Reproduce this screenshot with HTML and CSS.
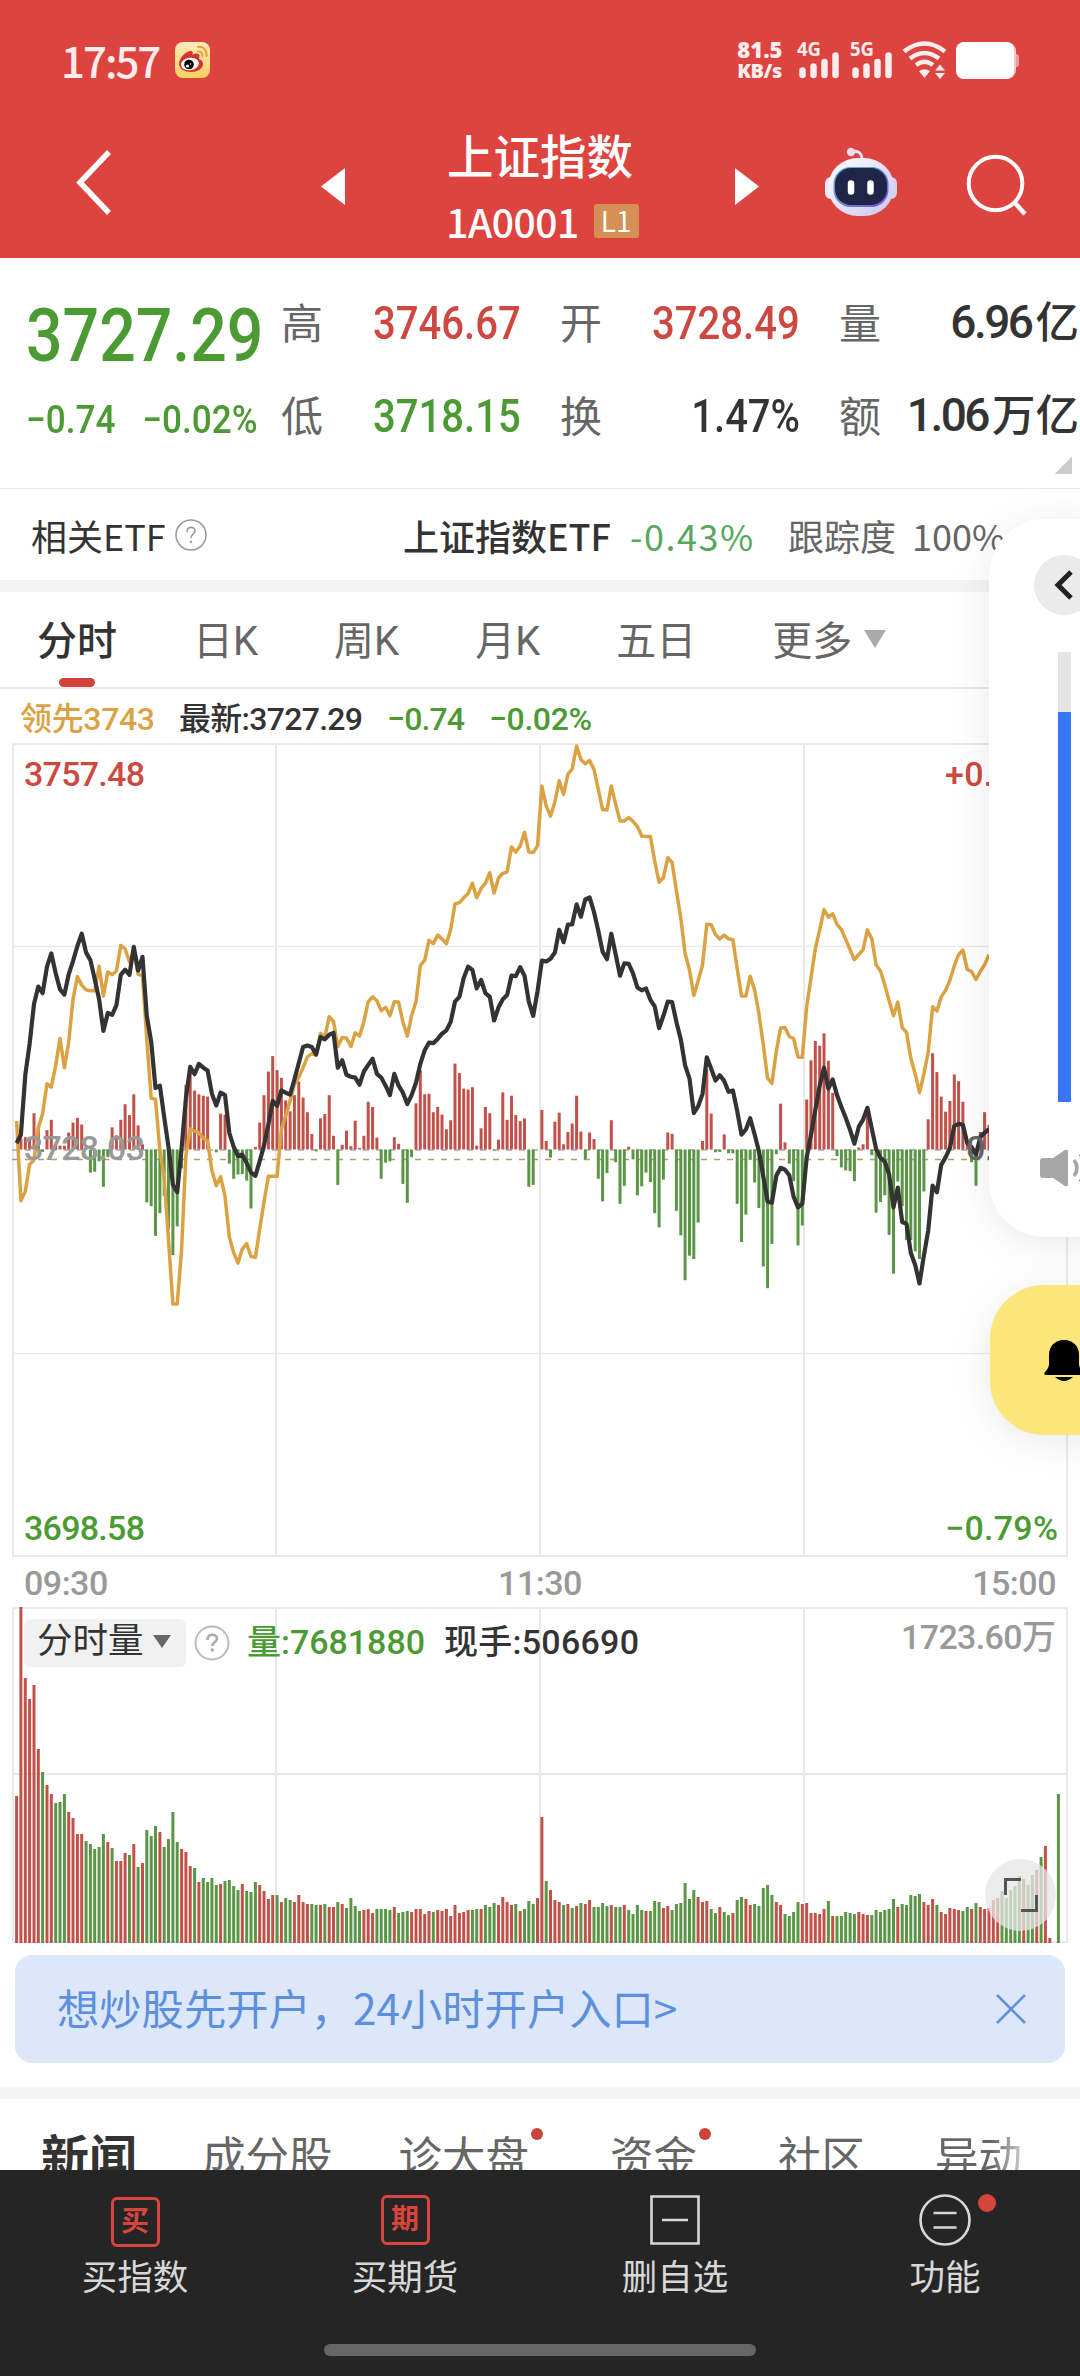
FILE: index.html
```html
<!DOCTYPE html>
<html lang="zh-CN">
<head>
    <meta charset="UTF-8">
    <meta name="viewport" content="width=device-width, initial-scale=1.0">
    <title>上证指数 1A0001</title>
    <link rel="stylesheet" href="styles.css">
</head>
<body>
    <header class="header">
        <div class="status">
            <span class="clock">17:57</span>
            <svg class="weibo" width="35" height="36" viewBox="0 0 35 36">
                <defs><linearGradient id="wb" x1="0" y1="0" x2="0" y2="1"><stop offset="0" stop-color="#fdebbb"/><stop offset="1" stop-color="#f8d160"/></linearGradient></defs>
                <rect width="35" height="36" rx="8" fill="url(#wb)"/>
                <path d="M4 22c0-6 7-13 12-13 2 0 2 2 1.500 4 3-2 7-2 7 1l-.5 3c3 1 4 3 4 5 0 5-6 8-12 8S4 27 4 22z" fill="#d5342d"/>
                <ellipse cx="15" cy="22" rx="9" ry="6.300" fill="#fff" transform="rotate(-8 15 22)"/>
                <circle cx="14" cy="22.500" r="4.800" fill="#000"/>
                <circle cx="12.500" cy="24" r="1.600" fill="#fff"/>
                <circle cx="15.500" cy="22" r=".8" fill="#fff"/>
                <path d="M23 5c5-1 9 3 8.500 9M23 9.500c3-.5 4.500 1.500 4.500 4.500" fill="none" stroke="#e9a03c" stroke-width="2" stroke-linecap="round"/>
            </svg>
            <div class="speed"><b>81.5</b><b class="unit">KB/s</b></div>
            <svg class="signals" width="98" height="38" viewBox="0 0 98 38" fill="#ffecec">
                <text class="net" x="0" y="15" textLength="24" lengthAdjust="spacingAndGlyphs">4G</text>
                <text class="net" x="53" y="15" textLength="24" lengthAdjust="spacingAndGlyphs">5G</text>
                <path d="M5.500 29.500v4.500M16.500 25.500v8.500M27.500 21v13M38.500 14.500v19.500M58.500 29.500v4.500M69.500 25.500v8.500M80.500 21v13M91.500 14.500v19.500" stroke="#ffecec" stroke-width="6.500" stroke-linecap="round"/>
            </svg>
            <svg class="wifi" width="45" height="38" viewBox="0 0 45 38">
                <path d="M2 10.500q20.500-16 41 0M8 17.500q14.500-11 29 0M14 24q8.500-6.500 17 0" fill="none" stroke="#ffecec" stroke-width="4.600"/>
                <path d="M17 30q5.500-3.500 11 0l-5.500 7zM33 29.500l5-6 5 6zM33 32l5 6 5-6z" fill="#ffecec"/>
            </svg>
            <svg class="battery" width="64" height="37" viewBox="0 0 64 37">
                <path d="M59 12h1q3 0 3 3v7q0 3-3 3h-1z" fill="#f0a09c"/>
                <rect width="60" height="37" rx="9" fill="#f7c6c4"/>
                <rect width="58" height="37" rx="8" fill="#fff"/>
            </svg>
        </div>
        <nav class="nav">
            <svg class="back" width="36" height="66" viewBox="0 0 36 66"><path d="M33 2L4 32.500 33 63" fill="none" stroke="#fff" stroke-width="5.500"/></svg>
            <svg class="prev" width="24" height="37" viewBox="0 0 24 37"><path d="M24 0v37L0 18.500z" fill="#fff"/></svg>
            <div class="title">
                <h1>上证指数</h1>
                <div class="code"><span>1A0001</span><i class="level">L1</i></div>
            </div>
            <svg class="next" width="24" height="37" viewBox="0 0 24 37"><path d="M0 0v37l24-18.500z" fill="#fff"/></svg>
            <svg class="robot" width="74" height="70" viewBox="0 0 74 70">
                <defs>
                    <linearGradient id="rb" x1="0" y1="0" x2="1" y2="1"><stop offset="0" stop-color="#fff"/><stop offset="1" stop-color="#c9c6ee"/></linearGradient>
                    <linearGradient id="rs" x1="0" y1="0" x2="1" y2="1"><stop offset="0" stop-color="#5fb3c8"/><stop offset="1" stop-color="#7a52e0"/></linearGradient>
                </defs>
                <path d="M28 5c6-2 10 1 10 8" fill="none" stroke="#f1e6f5" stroke-width="3"/>
                <circle cx="27" cy="5" r="4.200" fill="#efdcec"/>
                <rect x="1" y="30" width="12" height="22" rx="6" fill="#eceafa"/>
                <rect x="61" y="30" width="12" height="22" rx="6" fill="#d5d2f3"/>
                <rect x="4" y="11" width="66" height="58" rx="30" fill="url(#rb)"/>
                <rect x="9.500" y="20" width="55" height="40" rx="17" fill="url(#rs)"/>
                <rect x="11" y="21" width="52" height="37" rx="16" fill="#1e2547"/>
                <path d="M27 36.500v8M46.500 36.500v8" stroke="#fff" stroke-width="6.500" stroke-linecap="round"/>
            </svg>
            <svg class="search" width="62" height="64" viewBox="0 0 62 64"><circle cx="29.500" cy="30.500" r="26.800" fill="none" stroke="#fff" stroke-width="4"/><path d="M49 50l10 11" stroke="#fff" stroke-width="4.500"/></svg>
        </nav>
    </header>

    <section class="quote">
        <div class="last">
            <div class="price">3727.29</div>
            <div class="change"><span>−0.74</span><span>−0.02%</span></div>
        </div>
        <div class="stats">
            <div><label>高</label><span class="red">3746.67</span></div>
            <div><label>开</label><span class="red">3728.49</span></div>
            <div><label>量</label><span class="mixed">6.96<em>亿</em></span></div>
            <div><label>低</label><span class="green">3718.15</span></div>
            <div><label>换</label><span>1.47%</span></div>
            <div><label>额</label><span class="mixed">1.06<em>万亿</em></span></div>
        </div>
        <i class="corner"></i>
    </section>

    <section class="etf">
        <span>相关ETF</span>
        <svg class="help" width="32" height="32" viewBox="0 0 32 32"><circle cx="16" cy="16" r="15" fill="none" stroke="#999" stroke-width="1.500"/><path d="M12 13c0-6 8-6 8-1 0 3-4 3-4 7" fill="none" stroke="#999" stroke-width="1.600"/><circle cx="16" cy="23" r="1.200" fill="#999"/></svg>
        <b>上证指数ETF</b>
        <span class="etf-pct">-0.43%</span>
        <span class="track">跟踪度</span>
        <span class="track-num">100%</span>
    </section>

    <nav class="tabs">
        <span class="tab active">分时</span>
        <span class="tab">日K</span>
        <span class="tab">周K</span>
        <span class="tab">月K</span>
        <span class="tab">五日</span>
        <span class="tab">更多<i class="arrow"></i></span>
    </nav>

    <section class="charts">
        <svg class="legend" width="1080" height="55" viewBox="0 0 1080 55">
            <text x="20" y="41" fill="#dba243" textLength="134">领先3743</text>
            <text x="179" y="41" fill="#333" textLength="183">最新:3727.29</text>
            <text x="387" y="41" fill="#4b9a33" textLength="77">−0.74</text>
            <text x="489" y="41" fill="#4b9a33" textLength="102">−0.02%</text>
        </svg>
        <svg class="chart" id="priceChart" width="1056" height="815" viewBox="0 0 1056 815">
            <path class="grid" d="M1 1H1055V813H1ZM264 1V813M528 1V813M792 1V813"/>
            <path class="grid thin" d="M1 203.500H1055M1 610.500H1055"/>
            <path d="M0 407H1055" stroke="#aaa" stroke-width="1.500" stroke-dasharray="6 7"/>
            <path d="M0 416.500H1055" stroke="#b99a66" stroke-width="1.500" stroke-dasharray="6 7"/>
            <g id="momentum"></g>
            <polyline id="leadLine" fill="none" stroke="#dba243" stroke-width="3.500" stroke-linejoin="round"/>
            <polyline id="priceLine" fill="none" stroke="#333" stroke-width="4.200" stroke-linejoin="round"/>
            <text x="12" y="43" fill="#cc4840" textLength="120">3757.48</text>
            <text x="933" y="43" fill="#cc4840" textLength="112">+0.79%</text>
            <text x="12" y="417" fill="#999" textLength="120">3728.03</text>
            <text x="954" y="417" fill="#666" textLength="91">0.00%</text>
            <text x="12" y="797" fill="#4b9a33" textLength="120">3698.58</text>
            <text x="933" y="797" fill="#4b9a33" textLength="112">−0.79%</text>
        </svg>
        <div class="times"><span>09:30</span><span>11:30</span><span>15:00</span></div>
        <div class="volume">
            <svg class="chart" width="1056" height="336" viewBox="0 0 1056 336">
                <path class="grid" d="M1 1H1055V335H1ZM1 167H1055M264 1V335M528 1V335M792 1V335"/>
                <g id="volumeBars"></g>
                <text class="vol-text" x="235" y="47" fill="#4b9a33" textLength="177">量:7681880</text>
                <text class="vol-text" x="432" y="47" fill="#333" textLength="194">现手:506690</text>
                <text x="889" y="42" fill="#999" textLength="154">1723.60万</text>
            </svg>
            <div class="indicator">
                <span class="picker">分时量<i class="arrow dark"></i></span>
                <svg width="36" height="36" viewBox="0 0 36 36"><circle cx="18" cy="18" r="16.500" fill="none" stroke="#bbb" stroke-width="2"/><path d="M13.500 15c0-7 9.500-6.500 9.500-1.500 0 4-4.700 3.500-4.700 7.500" fill="none" stroke="#aaa" stroke-width="2.500"/><circle cx="18.300" cy="25" r="1.700" fill="#aaa"/></svg>
            </div>
            <div class="expand">
                <svg width="40" height="40" viewBox="0 0 40 40"><path d="M4.500 20V4.500H20M35.500 20V35.500H20" fill="none" stroke="#555" stroke-width="3"/></svg>
            </div>
        </div>
    </section>

    <div class="banner">
        <span>想炒股先开户，24小时开户入口&gt;</span>
        <svg width="32" height="32" viewBox="0 0 32 32"><path d="M2 2l28 28M30 2L2 30" stroke="#5c8fdc" stroke-width="2.500"/></svg>
    </div>

    <nav class="news">
        <b>新闻</b>
        <span>成分股</span>
        <span class="dot">诊大盘</span>
        <span class="dot">资金</span>
        <span>社区</span>
        <span class="fade">异动</span>
    </nav>

    <footer class="footer">
        <div class="actions">
            <div><i class="stamp buy">买</i><span>买指数</span></div>
            <div><i class="stamp">期</i><span>买期货</span></div>
            <div>
                <svg width="50" height="50" viewBox="0 0 50 50" fill="none" stroke="#d8d8d8" stroke-width="2.600"><path d="M1.500 1.500h47v47h-47zM12 25h26"/></svg>
                <span>删自选</span>
            </div>
            <div>
                <svg class="more" width="52" height="52" viewBox="0 0 52 52" fill="none" stroke="#d8d8d8" stroke-width="2.600"><circle cx="26" cy="26" r="24.500"/><path d="M14.500 19h23M14.500 33.500h23"/></svg>
                <span>功能</span>
                <i class="badge"></i>
            </div>
        </div>
        <div class="home"></div>
    </footer>

    <!-- system volume slider, half off screen -->
    <div class="volume-panel">
        <div class="collapse"><svg width="20" height="30" viewBox="0 0 20 30"><path d="M17 2L4 15l13 13" fill="none" stroke="#222" stroke-width="5"/></svg></div>
        <div class="slider"><div class="slider-fill"></div></div>
        <svg class="speaker" width="54" height="38" viewBox="0 0 54 38"><path d="M3 9h10L25 1q3-1 3 1v34q0 2-3 1L13 29H3q-3 0-3-3V12q0-3 3-3z" fill="#a5a5a5"/><path d="M34 11q6 8 0 16M40 5q10 14 0 28" fill="none" stroke="#a5a5a5" stroke-width="3.500"/></svg>
    </div>
    <div class="bell">
        <svg width="40" height="43" viewBox="0 0 40 43"><path d="M20 1c10 0 15 7 15 15v9q0 4 4 8 2 3-1 3H2q-3 0-1-3 4-4 4-8v-9C5 8 10 1 20 1z"/><path d="M11 38h18q-9 8-18 0z"/></svg>
    </div>

    <script src="script.js"></script>
</body>
</html>
```
FILE: styles.css
```css
* {
    margin: 0;
    padding: 0;
    box-sizing: border-box;
}

html {
    overflow: hidden;
}

body {
    width: 1080px;
    height: 2376px;
    display: flex;
    flex-direction: column;
    position: relative;
    overflow: hidden;
    background-color: #fff;
    color: #333;
    font-family: Roboto, "Noto Sans CJK SC", sans-serif;
}

i, em {
    font-style: normal;
}

svg {
    display: block;
    flex-shrink: 0;
}

.red {
    color: #cc4840;
}

.green {
    color: #4b9a33;
}

/* header */
.header {
    height: 258px;
    flex-shrink: 0;
    background-color: #dd4440;
    color: #fff;
}

.status {
    height: 120px;
    display: flex;
    align-items: center;
    padding: 0 60px 0 61px;
}

.clock {
    width: 115px;
    font: 500 42px "Noto Sans CJK SC", sans-serif;
    line-height: 50px;
    letter-spacing: -2px;
    color: #ffecec;
}

.speed {
    margin-left: 527px;
    width: 60px;
    display: flex;
    flex-direction: column;
    font: 700 22px/21px "Noto Sans", sans-serif;
    color: #ffecec;
}

.speed .unit {
    font-size: 20px;
    letter-spacing: -0.5px;
}

.net {
    font: 700 19px "Noto Sans", sans-serif;
}

.wifi {
    margin-left: 7px;
}

.battery {
    margin-left: 9px;
}

.nav {
    height: 138px;
    display: flex;
    align-items: center;
    padding-left: 76px;
}

.back {
    margin-bottom: 12px;
}

.prev {
    margin: 0 0 6px 209px;
}

.title {
    width: 390px;
    height: 138px;
    display: flex;
    flex-direction: column;
    align-items: center;
}

.title h1 {
    margin-top: 7px;
    font-size: 46.500px;
    font-weight: 500;
    line-height: 62px;
}

.code {
    display: flex;
    align-items: center;
    gap: 15px;
    margin-top: 12px;
    padding-left: 5px;
    font: 400 40px/40px "Noto Sans CJK SC", sans-serif;
}

.code span {
    font-weight: 500;
    font-size: 39px;
    letter-spacing: -0.5px;
}

.level {
    width: 45px;
    height: 34px;
    border-radius: 3px;
    background-color: #d69055;
    font-size: 28px;
    line-height: 33px;
    text-align: center;
}

.next {
    margin-bottom: 6px;
}

.robot {
    margin: 0 0 14px 65px;
}

.search {
    margin: 0 0 8px 68px;
}

/* quote */
.quote {
    position: relative;
    height: 231px;
    flex-shrink: 0;
    display: flex;
    padding-left: 26px;
    border-bottom: 1px solid #e8e8e8;
}

.last {
    width: 255px;
    color: #4b9a33;
    font-weight: 500;
}

.price {
    margin-top: 34px;
    font-size: 74px;
    line-height: 88px;
    transform: scaleX(0.87);
    transform-origin: left;
    white-space: nowrap;
}

.change {
    display: flex;
    gap: 30px;
    margin-top: 17px;
    font-size: 39px;
    line-height: 46px;
    transform: scaleX(0.9);
    transform-origin: left;
    white-space: nowrap;
}

.stats {
    display: grid;
    grid-template-columns: repeat(3, 240px);
    grid-template-rows: 93px 93px;
    column-gap: 39px;
    padding-top: 18px;
}

.stats div {
    display: flex;
    align-items: center;
    justify-content: space-between;
}

.stats label {
    padding-bottom: 4px;
    font-size: 42px;
    color: #666;
}

.stats span {
    font-size: 46px;
    font-weight: 500;
    transform: scaleX(0.87);
    transform-origin: right;
    white-space: nowrap;
}

.stats .mixed {
    transform: none;
    line-height: 54px;
    letter-spacing: -2.5px;
}

.stats em {
    margin-left: 4px;
    font-size: 43.500px;
    letter-spacing: 0;
}

.corner {
    position: absolute;
    right: 8px;
    bottom: 14px;
    width: 18px;
    height: 18px;
    background: linear-gradient(135deg, transparent 50%, #ccc 50%);
}

/* etf */
.etf {
    height: 103px;
    flex-shrink: 0;
    display: flex;
    align-items: center;
    padding-left: 31px;
    border-bottom: 12px solid #f4f4f4;
    font: 400 36px "Noto Sans CJK SC", sans-serif;
    white-space: nowrap;
}

.etf > span:first-child {
    width: 144px;
}

.etf b {
    width: 227px;
    margin-left: 196px;
    font-weight: 500;
}

.etf-pct {
    width: 158px;
    color: #55a85e;
    letter-spacing: 1.5px;
}

.track {
    width: 124px;
    color: #666;
}

.track-num {
    color: #666;
}

/* tabs */
.tabs {
    height: 97px;
    flex-shrink: 0;
    display: flex;
    padding-left: 37px;
    gap: 76px;
    border-bottom: 2px solid #e8e8e8;
    font-size: 40px;
    line-height: 97px;
    color: #666;
}

.tab {
    display: flex;
    align-items: center;
    padding-top: 4px;
}

.tab.active {
    position: relative;
    color: #333;
    font-weight: 500;
}

.tab.active::after {
    content: "";
    position: absolute;
    left: 22px;
    bottom: 0;
    width: 36px;
    height: 9px;
    border-radius: 5px;
    background-color: #d2433b;
}

.arrow {
    margin-left: 12px;
    margin-bottom: 6px;
    border: 11px solid transparent;
    border-top: 18px solid #aaa;
    border-bottom: none;
}

.arrow.dark {
    margin: 0;
    border-width: 13px 9px 0;
    border-top-color: #666;
}

/* charts */
.charts {
    flex-shrink: 0;
    font-size: 35px;
}

.charts text {
    font-size: 34px;
    font-weight: 500;
    letter-spacing: -1px;
}

.legend text {
    font-size: 32px;
}

.charts .vol-text {
    font-size: 34px;
}

.chart {
    margin-left: 12px;
}

.grid {
    fill: none;
    stroke: #e9e9e9;
    stroke-width: 2;
}

.grid.thin {
    stroke-width: 1.5;
}

#priceChart {
    margin-top: -1px;
}

.times {
    height: 49px;
    display: flex;
    justify-content: space-between;
    padding: 0 24px;
    line-height: 51px;
    font-size: 34px;
    font-weight: 500;
    color: #999;
    letter-spacing: -0.5px;
}

.volume {
    position: relative;
    height: 336px;
}

.indicator {
    position: absolute;
    left: 24px;
    top: 12px;
    display: flex;
    align-items: center;
    gap: 8px;
}

.picker {
    display: flex;
    align-items: center;
    justify-content: space-between;
    width: 162px;
    height: 48px;
    padding: 0 15px 3px 13px;
    border-radius: 6px;
    background-color: #f1f1f1;
    font-size: 35.500px;
    line-height: 45px;
}

.expand {
    position: absolute;
    left: 985px;
    top: 252px;
    width: 71px;
    height: 72px;
    display: flex;
    align-items: center;
    justify-content: center;
    border-radius: 50%;
    background-color: rgba(230, 230, 230, 0.75);
}

/* banner */
.banner {
    height: 108px;
    flex-shrink: 0;
    margin: 12px 15px 24px;
    padding: 0 38px 0 42px;
    display: flex;
    align-items: center;
    justify-content: space-between;
    border-radius: 17px;
    background-color: #dce7f9;
    color: #5c8fdc;
    font: 400 42.300px "Noto Sans CJK SC", sans-serif;
}

.banner span {
    padding-bottom: 5px;
}

/* news tabs */
.news {
    height: 83px;
    flex-shrink: 0;
    display: flex;
    overflow: hidden;
    padding: 28px 0 0 41px;
    border-top: 12px solid #f4f4f4;
    font-size: 43.500px;
    line-height: 64px;
    color: #666;
    white-space: nowrap;
}

.news b {
    width: 161px;
    flex-shrink: 0;
    font-size: 48px;
    font-weight: 700;
    color: #333;
}

.news span {
    flex-shrink: 0;
    margin-right: 66px;
}

.news span + span {
    margin-right: 81px;
}

.news .dot {
    position: relative;
}

.news .dot::after {
    content: "";
    position: absolute;
    right: -14px;
    top: 1px;
    width: 12px;
    height: 12px;
    border-radius: 50%;
    background-color: #cc433a;
}

.news .fade {
    margin-left: -11px;
    background: linear-gradient(90deg, #666 65%, #ccc);
    background-clip: text;
    -webkit-background-clip: text;
    color: transparent;
}

/* footer */
.footer {
    height: 207px;
    flex-shrink: 0;
    background-color: #252525;
    color: #d8d8d8;
}

.actions {
    height: 174px;
    display: grid;
    grid-template-columns: repeat(4, 1fr);
}

.actions div {
    position: relative;
    display: flex;
    flex-direction: column;
    align-items: center;
    padding-top: 25px;
    font-size: 35.500px;
    line-height: 50px;
}

.actions span {
    margin-top: 8px;
}

.actions .more {
    margin: -1px 0;
}

.stamp {
    width: 49px;
    height: 50px;
    border: 3px solid #d8443e;
    border-radius: 6px;
    color: #d8443e;
    font-size: 28px;
    font-weight: 700;
    line-height: 43px;
    text-align: center;
}

.stamp.buy {
    margin: 2px 0 -2px;
}

.badge {
    position: absolute;
    left: 168px;
    top: 24px;
    width: 18px;
    height: 18px;
    border-radius: 50%;
    background-color: #d5443c;
}

.home {
    width: 432px;
    height: 12px;
    margin: 0 auto;
    border-radius: 6px;
    background-color: #666;
}

/* overlays on the right edge */
.volume-panel {
    position: absolute;
    left: 989px;
    top: 519px;
    width: 150px;
    height: 718px;
    padding: 36px 0 0;
    display: flex;
    flex-direction: column;
    align-items: center;
    border-radius: 56px;
    background-color: #fff;
    box-shadow: 0 6px 40px rgba(0, 0, 0, 0.09);
}

.collapse {
    width: 60px;
    height: 60px;
    display: flex;
    align-items: center;
    justify-content: center;
    border-radius: 50%;
    background-color: #ebebeb;
}

.slider {
    width: 13px;
    height: 450px;
    margin-top: 37px;
    padding-top: 60px;
    background-color: #e5e5e5;
}

.slider-fill {
    height: 390px;
    background-color: #3875f6;
}

.speaker {
    margin: 47px 0 0 6px;
}

.bell {
    position: absolute;
    left: 990px;
    top: 1285px;
    width: 148px;
    height: 150px;
    display: flex;
    align-items: center;
    justify-content: center;
    border-radius: 54px;
    background-color: #fbe67a;
    box-shadow: 0 6px 40px rgba(0, 0, 0, 0.09);
}
```
FILE: script.js
```js
// one value per minute, 09:30 - 15:00
const STEP = 4.341;
const RED = "#c0524a";
const GREEN = "#5a9645";

// plot units, top edge = 304
const price = [
    1150,1132,1005,940,855,818,832,776,748,790,824,835,792,764,732,706,746,762,802,845,
    912,874,878,858,793,782,793,734,784,755,880,935,1033,1028,1095,1158,1238,1254,1160,1055,
    988,1004,982,990,996,1045,1070,1043,1048,1128,1158,1177,1174,1192,1212,1219,1188,1155,1110,1060,
    1071,1038,1043,1047,1015,980,946,943,946,962,925,930,920,916,990,974,1005,1009,1011,1026,
    998,984,971,1003,1011,1028,1048,1003,1028,1043,1067,1048,1022,982,953,937,938,929,918,911,
    893,850,840,800,776,783,822,804,832,840,890,862,845,836,795,796,777,795,850,880,
    828,763,765,759,746,698,724,687,686,644,670,633,629,660,700,744,760,706,750,795,
    769,770,790,820,826,822,846,860,906,880,850,851,893,930,985,1013,1086,1072,1046,968,
    992,1017,1006,1018,1041,1038,1082,1132,1121,1097,1131,1167,1220,1274,1276,1219,1202,1206,1218,1263,
    1286,1278,1180,1132,1080,1028,990,1034,1015,1048,1073,1096,1122,1151,1115,1100,1075,1119,1162,1181,
    1189,1216,1286,1244,1317,1321,1382,1408,1447,1388,1335,1240,1254,1196,1180,1160,1113,1109,1111,1150,
    1158,1174,1137,1128,1120
];

const lead = [
    1103,1272,1252,1195,1185,1118,1087,1024,1031,985,928,990,936,845,797,815,825,827,827,775,
    838,787,793,785,731,738,766,742,792,795,930,1055,1057,1165,1225,1355,1491,1491,1375,1175,
    1120,1124,1128,1139,1145,1208,1240,1221,1262,1348,1382,1404,1374,1363,1390,1392,1332,1275,1220,1220,
    1220,1120,1092,1060,1025,1010,990,967,960,964,917,925,882,892,945,926,927,945,916,923,
    892,850,840,848,869,862,880,850,851,893,923,880,850,774,762,720,727,709,717,727,
    697,643,640,630,621,599,630,610,599,577,620,588,578,575,522,533,520,491,533,534,
    520,393,435,457,427,382,411,368,357,308,337,346,339,358,400,443,444,393,432,467,
    467,460,468,479,499,500,500,552,597,587,545,555,615,673,748,783,837,806,773,686,
    687,708,717,709,717,719,780,838,838,796,825,875,942,1012,1023,955,906,905,924,928,
    967,968,860,800,738,698,655,671,664,686,697,718,740,761,750,740,698,717,772,785,
    815,848,880,851,905,915,970,1003,1043,1003,957,861,870,840,826,805,774,750,741,782,
    786,803,786,772,750
];

// above / below the zero line
const momentum = [
    0,23,26,26,77,50,-5,41,63,8,8,8,36,57,67,53,5,-49,-47,-25,
    -79,-16,47,30,63,96,73,117,51,11,-112,-120,-183,-135,-98,-170,-224,-163,-40,137,
    165,125,117,114,112,0,-6,76,74,-30,-62,-53,-52,-66,-125,5,57,115,165,198,
    168,152,104,81,115,144,110,79,33,-4,66,75,115,29,-75,10,40,7,61,3,
    29,101,90,25,-62,-28,-25,26,12,-73,-113,-16,98,168,117,118,79,90,74,43,
    62,182,162,129,127,132,8,45,90,77,-2,21,121,63,114,73,60,66,-79,-75,
    0,84,18,-17,59,78,11,37,55,114,38,-21,36,22,-62,-110,-50,62,-27,-115,
    -77,6,-21,-97,-78,-49,-69,-135,-165,-64,36,33,-130,-182,-277,-225,-232,-155,18,170,
    76,-6,-5,32,-8,-8,-115,-196,-138,-22,-70,-124,-248,-294,-200,-10,97,15,-30,-67,
    -203,-161,106,189,230,220,246,188,120,-14,-38,-44,-46,-67,4,11,82,-12,-134,-111,
    -97,-181,-263,-68,-120,-192,-192,-216,-232,-89,64,204,164,112,80,103,159,145,101,16,
    -27,-77,37,79,52
];

// negative = falling minute
const volume = [
    147,336,265,244,258,194,-171,158,149,-140,-141,-149,131,125,109,109,-102,-99,-94,-96,
    -109,101,-95,82,82,90,-88,99,-76,80,-113,-107,-117,111,-96,-104,-131,-101,94,91,
    77,-75,61,-65,-61,-65,-58,59,-62,-63,-57,-53,59,-52,-51,-61,58,52,44,48,
    -48,41,-45,-43,41,48,41,39,-39,-38,38,-39,36,36,-41,39,-35,-45,-37,-32,
    33,34,30,-34,-34,-34,-33,36,-30,-31,-32,31,34,34,29,32,-31,33,32,34,
    27,38,30,31,33,-33,-34,34,-38,-36,-40,38,46,41,38,-39,32,-34,-42,-39,
    45,126,-62,53,43,41,-38,39,-35,37,-40,39,43,-36,-36,-40,-37,38,-36,-36,
    38,-33,-29,-38,-33,32,-32,-42,-41,35,37,-33,-39,-40,-60,-44,-53,46,41,42,
    -34,-30,36,-31,-28,30,-43,-46,44,38,-39,-37,-55,-58,-48,41,38,-29,-27,-31,
    -41,39,40,30,30,29,34,-42,27,-27,-27,-31,-30,-29,31,29,28,-28,-33,-31,
    -33,-34,-44,36,-39,-38,-48,-47,-49,41,38,44,-38,31,29,35,34,33,-32,-36,
    34,-40,36,34,35,43,45,-52,-45,-53,-57,-67,64,-58,-68,73,-86,97,5,0,
    -149
];

const SCALE = 0.4719;
const xAt = i => 4.6 + i * STEP;

function linePoints(values) {
    return values.map((v, i) => `${xAt(i).toFixed(1)},${((v - 304) * SCALE + 1).toFixed(1)}`).join(" ");
}

function bar(i, y, height, up) {
    return `<rect x="${(xAt(i) - 1.5).toFixed(1)}" y="${y.toFixed(1)}" width="3" height="${height.toFixed(1)}" fill="${up ? RED : GREEN}"/>`;
}

document.getElementById("priceLine").setAttribute("points", linePoints(price));
document.getElementById("leadLine").setAttribute("points", linePoints(lead));

document.getElementById("momentum").innerHTML = momentum.map((v, i) => {
    const h = Math.abs(v) * SCALE;
    return bar(i, v > 0 ? 406.5 - h : 406.5, h, v > 0);
}).join("");

document.getElementById("volumeBars").innerHTML = volume.map((v, i) => {
    const h = Math.abs(v);
    return bar(i, 336 - h, h, v > 0);
}).join("");
```
